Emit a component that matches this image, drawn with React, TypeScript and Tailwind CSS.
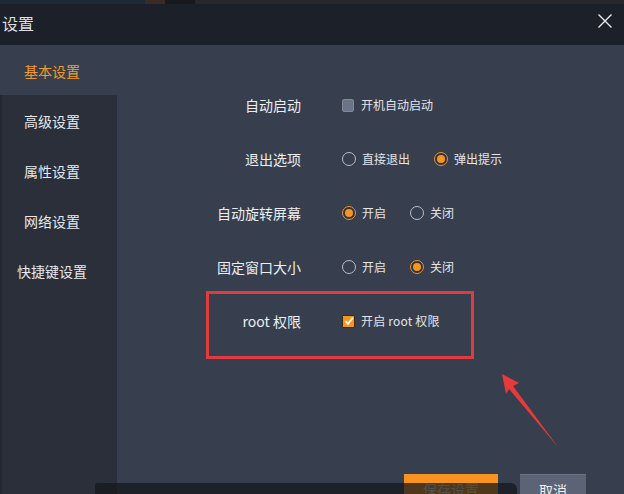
import React from "react";

const font = { fontFamily: '"Noto Sans CJK SC", "Noto Sans", sans-serif' };

function Radio({ checked, label }: { checked?: boolean; label: string }) {
  return (
    <div className="flex items-center">
      {checked ? (
        <span className="w-[14px] h-[14px] rounded-full border border-[#f0922a] flex items-center justify-center bg-[#2e3441]">
          <span className="w-[8px] h-[8px] rounded-full bg-[#f7961f]" />
        </span>
      ) : (
        <span className="w-[14px] h-[14px] rounded-full border border-[#b9bdc6]" />
      )}
      <span className="ml-[6px] text-[12px] leading-[14px] text-[#e3e5ea]">{label}</span>
    </div>
  );
}

function Row({ label, children }: { label: string; children: React.ReactNode }) {
  return (
    <div className="flex items-center h-[54px] shrink-0">
      <div className="w-[184px] text-right text-[14px] text-[#eceef2] leading-[18px]">{label}</div>
      <div className="ml-[41px] flex items-center">{children}</div>
    </div>
  );
}

export default function App() {
  const nav = ["基本设置", "高级设置", "属性设置", "网络设置", "快捷键设置"];
  return (
    <div className="relative w-[624px] h-[494px] overflow-hidden bg-[#373f4e]" style={font}>
      {/* title bar */}
      <div className="h-[45px] bg-[#1c2028] flex flex-col">
        <div className="h-[4px] flex">
          <div className="w-[145px] bg-[#1d2a33]" />
          <div className="w-[20px] bg-[#3a2a26]" />
          <div className="w-[30px] bg-[#17191c]" />
          <div className="flex-1 bg-[#26282c]" />
        </div>
        <div className="flex-1 flex items-center justify-between pl-[2px] pr-[11px]">
          <span className="text-[16px] text-[#dcdee3] leading-[20px] -mt-[4px]">设置</span>
          <svg width="16" height="16" viewBox="0 0 16 16" className="-mt-[7px]">
            <path d="M1.5 1.5 L14.5 14.5 M14.5 1.5 L1.5 14.5" stroke="#e8eaee" strokeWidth="1.4" />
          </svg>
        </div>
      </div>

      <div className="flex h-[449px]">
        {/* sidebar */}
        <div className="w-[117px] flex flex-col shrink-0">
          {nav.map((n, i) => (
            <div
              key={n}
              className={
                "h-[50px] shrink-0 flex items-center justify-center text-[14px] leading-[18px] pt-[2px] " +
                (i === 0
                  ? "bg-[#373f4e] text-[#f39a2c] pr-[13px]"
                  : "bg-[#2a2f3a] text-[#e6e8ec] border-l-[2px] border-[#222833] pr-[15px]")
              }
            >
              {n}
            </div>
          ))}
          <div className="flex-1 bg-[#2a2f3a] border-l-[2px] border-[#222833]" />
        </div>

        {/* content */}
        <div className="flex-1 flex flex-col pt-[33px]">
          <Row label="自动启动">
            <span className="w-[12px] h-[13px] rounded-[2px] bg-[#6c7489] border border-[#808799]" />
            <span className="ml-[7px] text-[12px] leading-[14px] text-[#e3e5ea]">开机自动启动</span>
          </Row>
          <Row label="退出选项">
            <div className="flex items-center gap-[24px]">
              <Radio label="直接退出" />
              <Radio checked label="弹出提示" />
            </div>
          </Row>
          <Row label="自动旋转屏幕">
            <div className="flex items-center gap-[24px]">
              <Radio checked label="开启" />
              <Radio label="关闭" />
            </div>
          </Row>
          <Row label="固定窗口大小">
            <div className="flex items-center gap-[24px]">
              <Radio label="开启" />
              <Radio checked label="关闭" />
            </div>
          </Row>
          <Row label="root 权限">
            <span className="w-[13px] h-[13px] rounded-[1px] bg-[#f7961f] border border-[#3a2a1a] flex items-center justify-center">
              <svg width="10" height="10" viewBox="0 0 10 10">
                <path d="M1.5 5.2 L4 7.8 L8.8 1.8" stroke="#ffffff" strokeWidth="1.8" fill="none" />
              </svg>
            </span>
            <span className="ml-[6px] text-[12px] leading-[14px] text-[#e3e5ea] tracking-[0.2px]">开启 root 权限</span>
          </Row>

          <div className="mt-[126px] shrink-0 flex justify-end pr-[38px] gap-[22px]">
            <div className="w-[94px] h-[30px] bg-[#f7931e] text-[14px] text-[#fff1de] flex items-center justify-center leading-[18px]">
              保存设置
            </div>
            <div className="w-[66px] h-[30px] bg-[#5b6375] border-t border-[#6a7284] text-[14px] text-[#f0f1f4] flex items-center justify-center leading-[18px]">
              取消
            </div>
          </div>
        </div>
      </div>

      {/* annotation box */}
      <div className="absolute left-[206px] top-[291px] w-[268px] h-[68px] border-[3px] border-[#e23b3f]" />
      {/* arrow */}
      <svg className="absolute left-0 top-0" width="624" height="494" viewBox="0 0 624 494">
        <polygon points="502,374 519,383 513,386 558,447 509,389 506,394" fill="#e8393c" />
      </svg>
      {/* dark overlay bar */}
      <div className="absolute left-[95px] top-[483px] w-[422px] h-[11px] bg-[#15181e]/75 rounded-tl-[3px] rounded-tr-[6px]" />
    </div>
  );
}
